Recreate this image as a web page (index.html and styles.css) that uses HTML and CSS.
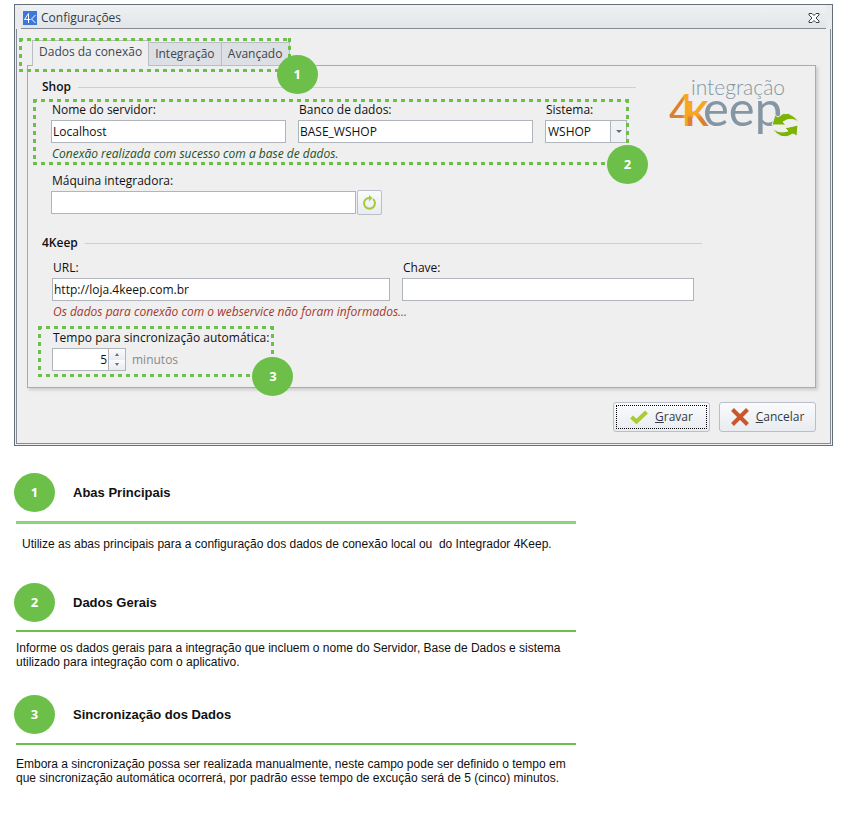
FILE: index.html
```
<!DOCTYPE html>
<html lang="pt-BR">
<head>
  <meta charset="UTF-8">
  <meta name="viewport" content="width=device-width, initial-scale=1.0">
  <title>Configurações - Integrador 4Keep</title>
  <link rel="stylesheet" href="styles.css">
</head>
<body>
  <main class="page">
    <section class="dialog" aria-label="Configurações">
      <header class="titlebar">
        <svg class="app-icon" width="14" height="14" viewBox="0 0 14 14" aria-hidden="true">
          <rect width="14" height="14" fill="#3b78d8"/>
          <path d="M5.500 12V2.500L1.500 8.500H7.500M12.500 4L8.500 8L12.500 12" fill="none" stroke="#fff" stroke-width="1"/>
        </svg>
        <span class="title">Configurações</span>
        <button class="close" type="button" aria-label="Fechar">
          <svg width="12" height="10" viewBox="0 0 12 10">
            <path d="M1 .5H4L6 2.500L8 .5H11V2L8 5L11 8V9.500H8L6 7.500L4 9.500H1V8L4 5L1 2Z" fill="#fff" stroke="#3c4148" stroke-width="1"/>
          </svg>
        </button>
      </header>

      <form class="dialog-body">
        <div class="callout tabs-callout">
          <div class="tabs" role="tablist">
            <button class="tab active" type="button" role="tab" aria-selected="true">Dados da conexão</button>
            <button class="tab" type="button" role="tab" aria-selected="false">Integração</button>
            <button class="tab" type="button" role="tab" aria-selected="false">Avançado</button>
          </div>
          <div class="outline"><span class="badge">1</span></div>
        </div>

        <div class="panel">
          <div class="top">
            <section class="group">
              <h2 class="legend">Shop</h2>
              <div class="fields">
                <div class="callout shop-callout">
                  <div class="row shop-row">
                    <div class="field">
                      <label for="server">Nome do servidor:</label>
                      <input id="server" class="input" type="text" value="Localhost">
                    </div>
                    <div class="field">
                      <label for="database">Banco de dados:</label>
                      <input id="database" class="input" type="text" value="BASE_WSHOP">
                    </div>
                    <div class="field">
                      <label for="system">Sistema:</label>
                      <div class="select-box">
                        <select id="system" class="select"><option>WSHOP</option></select>
                        <span class="arrow down"></span>
                      </div>
                    </div>
                  </div>
                  <p class="message ok">Conexão realizada com sucesso com a base de dados.</p>
                  <div class="outline"><span class="badge">2</span></div>
                </div>
                <div class="field machine">
                  <label for="machine">Máquina integradora:</label>
                  <div class="machine-row">
                    <input id="machine" class="input" type="text">
                    <button class="refresh" type="button" aria-label="Atualizar">
                      <svg width="15" height="16" viewBox="0 0 15 16">
                        <path d="M11 4A5.500 5.500 0 1 1 4 4Q5.500 3 8 3" fill="none" stroke="#a5c93a" stroke-width="2"/>
                        <path d="M7 0L10.500 3L7 6.500Z" fill="#a5c93a"/>
                      </svg>
                    </button>
                  </div>
                </div>
              </div>
            </section>

            <svg class="logo" width="132" height="68" viewBox="0 0 132 68" role="img" aria-label="integração 4Keep">
              <defs>
                <linearGradient id="four" x1="0" y1="0" x2="1" y2="0">
                  <stop offset="0.500" stop-color="#dc7f2e"/>
                  <stop offset="0.600" stop-color="#f6a623"/>
                </linearGradient>
                <linearGradient id="kay" x1="0" y1="0" x2="0" y2="1">
                  <stop offset="0.550" stop-color="#f6a623"/>
                  <stop offset="0.650" stop-color="#dc7f2e"/>
                </linearGradient>
              </defs>
              <text x="22" y="21" class="logo-small">integração</text>
              <text x="0" y="52" class="logo-four" fill="url(#four)">4</text>
              <text x="16" y="52" class="logo-k" fill="url(#kay)">K</text>
              <text x="34" y="52" class="logo-eep">eep</text>
              <path d="M103 51L106 41L109 43Q119 33 131 49Q122 42 114 48L117 51Z" fill="#7cb305" stroke="#efefef" stroke-width="1"/>
              <path d="M103 54Q110 60 119 57L116 54L129 51L128 62L124 60Q112 68 103 54Z" fill="#7cb305" stroke="#efefef" stroke-width="1"/>
            </svg>
          </div>

          <section class="group keep-group">
            <h2 class="legend">4Keep</h2>
            <div class="fields">
              <div class="row keep-row">
                <div class="field">
                  <label for="url">URL:</label>
                  <input id="url" class="input" type="text" value="http://loja.4keep.com.br">
                </div>
                <div class="field">
                  <label for="key">Chave:</label>
                  <input id="key" class="input" type="text">
                </div>
              </div>
              <p class="message error">Os dados para conexão com o webservice não foram informados...</p>
              <div class="callout time-callout">
                <div class="field">
                  <label for="minutes">Tempo para sincronização automática:</label>
                  <div class="time-row">
                    <div class="spinner">
                      <input id="minutes" class="input number" type="number" value="5" min="1">
                      <div class="spin-buttons">
                        <button type="button" aria-label="Aumentar"><span class="arrow up"></span></button>
                        <button type="button" aria-label="Diminuir"><span class="arrow down"></span></button>
                      </div>
                    </div>
                    <span class="unit">minutos</span>
                  </div>
                </div>
                <div class="outline"><span class="badge">3</span></div>
              </div>
            </div>
          </section>
        </div>

        <div class="actions">
          <button class="action focused" type="button">
            <svg width="18" height="16" viewBox="0 0 18 16" aria-hidden="true">
              <path d="M1.500 8L6.500 12.500L16.500 3" fill="none" stroke="#a9cc2e" stroke-width="4"/>
            </svg>
            <span><u>G</u>ravar</span>
          </button>
          <button class="action" type="button">
            <svg width="18" height="18" viewBox="0 0 18 18" aria-hidden="true">
              <path d="M1.500 1.500L16.500 16.500M16.500 1.500L1.500 16.500" fill="none" stroke="#c8572b" stroke-width="4"/>
            </svg>
            <span><u>C</u>ancelar</span>
          </button>
        </div>
      </form>
    </section>

    <section class="notes">
      <article class="note first">
        <div class="note-head"><span class="badge">1</span><h3>Abas Principais</h3></div>
        <p>Utilize as abas principais para a configuração dos dados de conexão local ou&nbsp; do Integrador 4Keep.</p>
      </article>
      <article class="note">
        <div class="note-head"><span class="badge">2</span><h3>Dados Gerais</h3></div>
        <p>Informe os dados gerais para a integração que incluem o nome do Servidor, Base de Dados e sistema utilizado para integração com o aplicativo.</p>
      </article>
      <article class="note last">
        <div class="note-head"><span class="badge">3</span><h3>Sincronização dos Dados</h3></div>
        <p>Embora a sincronização possa ser realizada manualmente, neste campo pode ser definido o tempo em que sincronização automática ocorrerá, por padrão esse tempo de excução será de 5 (cinco) minutos.</p>
      </article>
    </section>
  </main>
</body>
</html>
```
FILE: styles.css
```
* {
  box-sizing: border-box;
}
body {
  margin: 0;
  background: #fff;
  color: #111;
  font-family: "Open Sans", "Noto Sans", sans-serif;
  font-size: 12px;
  line-height: 16px;
}
h2, h3, p {
  margin: 0;
}
button, input, select {
  font: inherit;
  color: inherit;
  margin: 0;
}
.page {
  padding: 4px 20px 20px 14px;
}

/* Dialog window */
.dialog {
  background: #efefef;
  border: 1px solid #666e78;
}
.titlebar {
  display: flex;
  align-items: center;
  height: 24px;
  margin: 0 6px;
  padding: 2px 6px 0 2px;
  border-bottom: 1px solid #888c92;
  background: linear-gradient(#eff1f4, #e2e5e9);
  box-shadow: -6px 0 #e9ebee, 6px 0 #e9ebee;
  color: #333b45;
}
.title {
  flex: 1;
  margin-left: 4px;
}
.close {
  display: flex;
  padding: 0;
  border: 0;
  background: none;
}
.dialog-body {
  margin: 0 1px 1px;
  padding: 11px 14px 11px 10px;
  border: 1px solid #858c96;
  border-top: 0;
}

/* Numbered callouts drawn over the controls */
.callout {
  position: relative;
}
.outline {
  --dash: #6cc04a 0 4px, transparent 4px 8px;
  position: absolute;
  z-index: 1;
  pointer-events: none;
  background:
    repeating-linear-gradient(90deg, var(--dash)) top / 100% 3px no-repeat,
    repeating-linear-gradient(90deg, var(--dash)) bottom / 100% 3px no-repeat,
    repeating-linear-gradient(180deg, var(--dash)) left / 3px 100% no-repeat,
    repeating-linear-gradient(180deg, var(--dash)) right / 3px 100% no-repeat;
}
.badge {
  display: flex;
  align-items: center;
  justify-content: center;
  width: 41px;
  height: 39px;
  padding-bottom: 2px;
  border-radius: 50%;
  background: #6cc04a;
  color: #fff;
  font-size: 13px;
  font-weight: bold;
}
.outline .badge {
  position: absolute;
  right: -19px;
  bottom: -19px;
}
.tabs-callout .outline {
  inset: -2px -1px -6px -13px;
}
.tabs-callout .outline .badge {
  right: -27px;
  bottom: -22px;
}
.shop-callout .outline {
  inset: -3px -2px -3px -18px;
}
.time-callout .outline {
  inset: -4px -5px -6px -14px;
}

/* Tabs */
.tabs-callout {
  width: fit-content;
  margin: 0 0 -1px 5px;
}
.tabs {
  display: flex;
  align-items: flex-end;
}
.tab {
  min-width: 68px;
  height: 24px;
  padding: 0 6px;
  border: 1px solid #b9bec6;
  border-left: 0;
  background: #dcdfe3;
  color: #3e4651;
}
.tab.active {
  height: 26px;
  padding-bottom: 3px;
  border-left: 1px solid #b9bec6;
  border-bottom: 0;
  background: #efefef;
}
.panel {
  padding: 13px 14px 16px;
  border: 1px solid #a6abb5;
  box-shadow: 2px 2px 3px rgba(0, 0, 0, 0.15);
}

/* Groups and fields */
.top {
  display: flex;
  align-items: flex-start;
  gap: 33px;
}
.top .group {
  flex: 1;
}
.legend {
  display: flex;
  align-items: center;
  gap: 7px;
  font-size: 12px;
  font-weight: 600;
}
.legend::after {
  content: "";
  flex: 1;
  height: 1px;
  background: #cfcfcf;
}
.fields {
  padding: 7px 9px 0;
}
.row {
  display: grid;
  gap: 12px;
}
.shop-row {
  grid-template-columns: 1fr 1fr 82px;
}
.keep-row {
  grid-template-columns: 338fr 292fr;
}
.keep-group {
  margin: 21px 99px 0 0;
}
.keep-group .fields {
  padding: 9px 8px 0 10px;
}
.field {
  display: flex;
  flex-direction: column;
  gap: 2px;
  min-width: 0;
}
.field label {
  padding-left: 1px;
}
.input {
  width: 100%;
  height: 23px;
  padding: 0 1px;
  border: 1px solid #b0b5bc;
  border-radius: 0;
  background: #fff;
}
.message {
  padding: 3px 0 0 1px;
  font-style: italic;
}
.message.ok {
  color: #1c5226;
}
.message.error {
  color: #a8382a;
}
.select-box {
  display: grid;
  align-items: center;
}
.select-box > * {
  grid-area: 1 / 1;
}
.select {
  appearance: none;
  width: 100%;
  height: 23px;
  padding: 0 2px;
  border: 1px solid #b0b5bc;
  border-radius: 0;
  background: linear-gradient(90deg, #b0b5bc 1px, #f0f2f5 1px) right / 16px 100% no-repeat #fff;
}
.select-box .arrow {
  justify-self: end;
  margin-right: 5px;
}
.arrow {
  display: block;
  border: 3px solid transparent;
  pointer-events: none;
}
.arrow.down {
  border-top-color: #666e78;
  border-bottom: 0;
}
.arrow.up {
  border-bottom-color: #666e78;
  border-top: 0;
}
.machine {
  margin-top: 11px;
}
.machine-row {
  display: flex;
  align-items: center;
  gap: 1px;
}
.machine-row .input {
  width: 53%;
}
.refresh {
  display: flex;
  align-items: center;
  justify-content: center;
  width: 25px;
  height: 25px;
  margin: -1px 0;
  padding: 0;
  border: 1px solid #b9bec8;
  border-radius: 2px;
  background: linear-gradient(#fafbfc, #e8ebf0);
}
.time-callout {
  width: fit-content;
  margin-top: 10px;
}
.time-row {
  display: flex;
  align-items: center;
  gap: 6px;
}
.spinner {
  display: flex;
  width: 74px;
  border: 1px solid #b0b5bc;
  background: #fff;
}
.number {
  appearance: textfield;
  flex: 1;
  min-width: 0;
  height: 21px;
  border: 0;
  text-align: right;
}
.number::-webkit-inner-spin-button {
  appearance: none;
}
.spin-buttons {
  display: flex;
  flex-direction: column;
  width: 17px;
  border-left: 1px solid #b0b5bc;
}
.spin-buttons button {
  display: flex;
  flex: 1;
  align-items: center;
  justify-content: center;
  padding: 0;
  border: 0;
  background: linear-gradient(#fafbfc, #e8ebf0);
}
.spin-buttons .arrow {
  border-left-width: 2px;
  border-right-width: 2px;
}
.unit {
  color: #8a8a8a;
}

/* Logo */
.logo {
  flex: none;
  margin-top: -5px;
}
.logo text {
  font-family: Lato, sans-serif;
}
.logo-small {
  fill: #8496a3;
  font-size: 21px;
  font-weight: 300;
}
.logo-four {
  font-size: 44px;
}
.logo-k {
  font-size: 34px;
  font-weight: bold;
}
.logo-eep {
  fill: #8496a3;
  font-size: 49px;
}

/* Dialog buttons */
.actions {
  display: flex;
  justify-content: flex-end;
  gap: 9px;
  margin-top: 14px;
}
.action {
  display: flex;
  align-items: center;
  justify-content: center;
  gap: 7px;
  width: 97px;
  height: 30px;
  padding: 0;
  border: 1px solid #b9bec8;
  border-radius: 3px;
  background: linear-gradient(#fafbfc, #e8ebf0);
  color: #333b45;
}
.focused {
  outline: 1px dotted #000;
  outline-offset: -4px;
}

/* Notes under the window */
.notes {
  max-width: 562px;
  margin-top: 27px;
  font-family: "Liberation Sans", Arial, sans-serif;
  line-height: 14px;
}
.note {
  margin-bottom: 26px;
}
.note-head {
  display: flex;
  align-items: center;
  gap: 18px;
}
.note-head .badge {
  font-family: "Open Sans", sans-serif;
}
.note h3 {
  font-size: 13px;
}
.note p {
  margin: 8px 0 0 2px;
  padding-top: 9px;
  border-top: 2px solid #6cc04a;
}
.note.first p {
  margin-top: 9px;
  padding: 13px 0 6px 6px;
  border-top: 3px solid #8ed279;
}
.note.last p {
  margin-top: 9px;
  padding-top: 12px;
}
```
